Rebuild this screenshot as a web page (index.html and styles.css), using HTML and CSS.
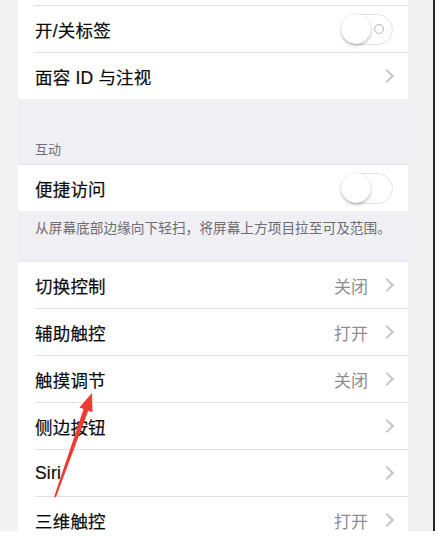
FILE: index.html
```html
<!DOCTYPE html>
<html lang="zh-CN">
<head>
<meta charset="utf-8">
<title>辅助功能</title>
<link rel="stylesheet" href="styles.css">
</head>
<body>
<div class="frame">
  <div class="strip-left"></div>
  <div class="panel">
    <div class="group group-top">
      <div class="row-cut"></div>
      <div class="row">
        <span class="label">开/关标签</span>
        <span class="toggle"><span class="knob"></span><span class="off-mark"></span></span>
      </div>
      <div class="row">
        <span class="label">面容 ID 与注视</span>
        <span class="chev"></span>
      </div>
    </div>
    <div class="header">互动</div>
    <div class="group">
      <div class="row">
        <span class="label">便捷访问</span>
        <span class="toggle"><span class="knob"></span></span>
      </div>
    </div>
    <div class="footer">从屏幕底部边缘向下轻扫，将屏幕上方项目拉至可及范围。</div>
    <div class="group">
      <div class="row"><span class="label">切换控制</span><span class="value">关闭</span><span class="chev"></span></div>
      <div class="row"><span class="label">辅助触控</span><span class="value">打开</span><span class="chev"></span></div>
      <div class="row"><span class="label">触摸调节</span><span class="value">关闭</span><span class="chev"></span></div>
      <div class="row"><span class="label">侧边按钮</span><span class="chev"></span></div>
      <div class="row"><span class="label">Siri</span><span class="chev"></span></div>
      <div class="row"><span class="label">三维触控</span><span class="value">打开</span><span class="chev"></span></div>
    </div>
  </div>
  <div class="strip-right"></div>
</div>
<svg class="arrow" width="438" height="537" viewBox="0 0 438 537">
  <polygon points="54.1,496.7 83.6,409.1 79.4,407.6 92,393 92.5,412.3 88.3,410.8 55.9,497.3" fill="#ee3b32"/>
</svg>
</body>
</html>
```
FILE: styles.css
```css
html, body {
  margin: 0;
  padding: 0;
  background: #ffffff;
}
body {
  width: 438px;
  height: 537px;
  overflow: hidden;
  position: relative;
  font-family: "Liberation Sans", "Noto Sans CJK SC", sans-serif;
}
.frame {
  display: flex;
  width: 433px;
  height: 531px;
  border-right: 2px solid #262626;
  background: #efeff4;
  overflow: hidden;
}
.strip-left {
  width: 18px;
  flex: none;
  background: #f2f2f2;
}
.strip-right {
  flex: 1;
  background: #f0f0f0;
  border-top-left-radius: 8px;
}
.panel {
  width: 390px;
  flex: none;
  background: #efeff4;
  display: flex;
  flex-direction: column;
}
.panel > * {
  flex: none;
}
.group {
  background: #ffffff;
  box-shadow: 0 -1px 0 #e4e4e8;
}
.group-top {
  box-shadow: none;
}
.row-cut {
  height: 5px;
  border-bottom: 1px solid #e0e0e4;
  margin-left: 16px;
}
.row {
  height: 46px;
  display: flex;
  align-items: center;
  margin-left: 17px;
  padding-right: 14px;
  border-bottom: 1px solid #e0e0e4;
  box-sizing: content-box;
}
.group-top .row {
  margin-left: 16px;
  padding-left: 1px;
}
.row:last-child {
  border-bottom: none;
}
.label {
  flex: 1;
  font-size: 17.5px;
  color: #0a0a0a;
  letter-spacing: 0.2px;
  -webkit-text-stroke: 0.2px #0a0a0a;
}
.value {
  font-size: 17px;
  color: #8e8e93;
  margin-right: 14px;
}
.chev {
  width: 8px;
  height: 8px;
  border-right: 2px solid #c4c4c9;
  border-top: 2px solid #c4c4c9;
  transform: rotate(45deg);
  margin-right: 2px;
}
.toggle {
  position: relative;
  width: 50px;
  height: 29px;
  border: 1.5px solid #e3e3e6;
  border-radius: 16px;
  background: #ffffff;
  margin-right: 1px;
}
.knob {
  position: absolute;
  left: -1px;
  top: -1px;
  width: 30px;
  height: 30px;
  border-radius: 50%;
  background: #ffffff;
  box-shadow: 0 2px 3px rgba(0,0,0,0.22), 0 0 0 0.5px rgba(0,0,0,0.08);
}
.off-mark {
  position: absolute;
  right: 8px;
  top: 9px;
  width: 10px;
  height: 10px;
  border: 1.5px solid #b4b4b8;
  border-radius: 50%;
  box-sizing: border-box;
}
.header {
  height: 66px;
  box-sizing: border-box;
  padding: 43px 0 0 17px;
  font-size: 13px;
  color: #6d6d72;
  line-height: 16px;
}
.footer {
  height: 51px;
  box-sizing: border-box;
  padding: 9px 0 0 17px;
  font-size: 13.7px;
  line-height: 17px;
  color: #6d6d72;
}
.arrow {
  position: absolute;
  left: 0;
  top: 0;
  pointer-events: none;
}
```
